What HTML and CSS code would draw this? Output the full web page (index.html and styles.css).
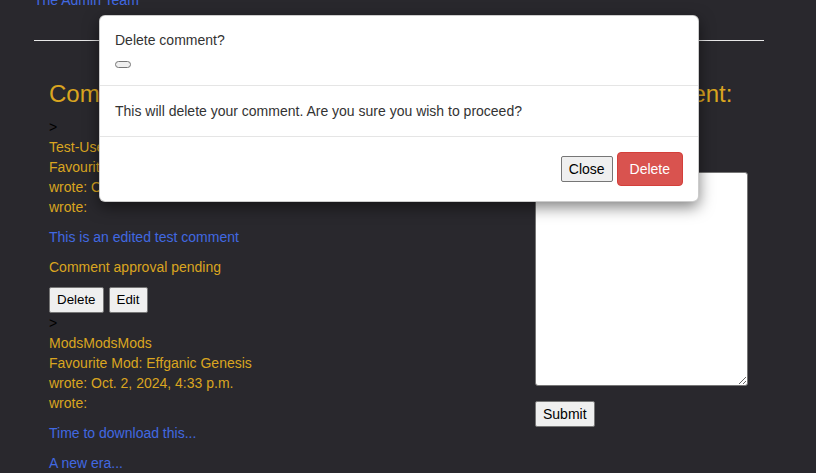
FILE: index.html
```html
<!DOCTYPE html>
<html lang="en">
<head>
<meta charset="utf-8">
<title>Comments</title>
<link rel="stylesheet" href="styles.css">
</head>
<body>
<div class="page">
  <p class="signoff"><a class="link" href="#">The Admin Team</a></p>
  <hr class="rule">
  <div class="row">
    <div class="col-main">
      <h3 class="heading">Comments:</h3>
      <div class="comment">
        <div class="marker">&gt;</div>
        <p class="meta">Test-User<br>Favourite Mod: Effganic Genesis<br>wrote: Oct. 1, 2024, 2:15 p.m.<br>wrote:</p>
        <p class="body-text">This is an edited test comment</p>
        <p class="meta">Comment approval pending</p>
        <div class="actions"><button class="btn-plain btn-small">Delete</button> <button class="btn-plain btn-small">Edit</button></div>
      </div>
      <div class="comment">
        <div class="marker">&gt;</div>
        <p class="meta">ModsModsMods<br>Favourite Mod: Effganic Genesis<br>wrote: Oct. 2, 2024, 4:33 p.m.<br>wrote:</p>
        <p class="body-text">Time to download this...</p>
        <p class="body-text">A new era...</p>
      </div>
    </div>
    <div class="col-side">
      <h3 class="heading">Leave a comment:</h3>
      <form class="comment-form">
        <label class="field-label" for="body">Body:</label>
        <textarea id="body" class="field"></textarea>
        <button type="button" class="btn-plain">Submit</button>
      </form>
    </div>
  </div>
</div>

<div class="modal">
  <div class="modal-header">
    <h4 class="modal-title">Delete comment?</h4>
    <button type="button" class="btn-x" aria-label="Close"></button>
  </div>
  <div class="modal-body">
    <p class="modal-text">This will delete your comment. Are you sure you wish to proceed?</p>
  </div>
  <div class="modal-footer">
    <button type="button" class="btn-plain">Close</button> <button type="button" class="btn-danger">Delete</button>
  </div>
</div>
</body>
</html>
```

FILE: styles.css
```css
html, body {
  margin: 0;
  padding: 0;
}

body {
  background: #29282d;
  color: #333;
  font-family: "Liberation Sans", Arial, sans-serif;
  font-size: 14px;
  line-height: 20px;
  overflow: hidden;
}

.page {
  width: 730px;
  margin-left: 34px;
}

.signoff {
  margin: -10px 0 10px;
}

.link {
  color: royalblue;
  text-decoration: none;
}

.rule {
  margin: 30px 0 20px;
  border: 0;
  border-top: 1px solid #e8e8e8;
  height: 0;
}

.row {
  display: grid;
  grid-template-columns: 486px 244px;
}

.col-main,
.col-side {
  padding: 0 15px;
}

.heading {
  margin: 20px 0 10px;
  font-size: 24px;
  line-height: 1.1;
  font-weight: 500;
  color: goldenrod;
}

.marker {
  color: #000;
}

.meta {
  margin: 0 0 10px;
  color: goldenrod;
}

.body-text {
  margin: 0 0 10px;
  color: royalblue;
}

.actions {
  display: flex;
  gap: 5px;
}

.btn-plain {
  font-family: "Liberation Sans", Arial, sans-serif;
  font-size: 14px;
  line-height: 20px;
  color: #000;
  background: #efefef;
  border: 1px solid #767676;
  border-radius: 2px;
  padding: 2px 7px;
  margin: 0;
}

.btn-small {
  font-size: 13.33px;
}

.field-label {
  display: block;
  margin-bottom: 35px;
  color: goldenrod;
}

.field {
  display: block;
  box-sizing: border-box;
  width: 213px;
  height: 214px;
  margin: 0 0 15px;
  border: 1px solid #767676;
  border-radius: 3px;
  background: #fff;
  font: inherit;
}

.modal {
  position: absolute;
  top: 15px;
  left: 99px;
  width: 600px;
  background: #fff;
  border: 1px solid rgba(0, 0, 0, 0.2);
  border-radius: 6px;
  box-shadow: 0 5px 15px rgba(0, 0, 0, 0.5);
  box-sizing: border-box;
  color: #333;
}

.modal-header {
  padding: 14px 15px 15px;
  border-bottom: 1px solid #e5e5e5;
}

.modal-title {
  margin: 0;
  font-size: 14px;
  line-height: 20px;
  font-weight: 400;
}

.btn-x {
  display: block;
  width: 16px;
  height: 7px;
  margin: 11px 0 2px;
  padding: 0;
  background: #efefef;
  border: 1px solid #767676;
  border-radius: 4px;
}

.modal-body {
  padding: 15px;
}

.modal-text {
  margin: 0;
}

.modal-footer {
  padding: 15px;
  border-top: 1px solid #e5e5e5;
  text-align: right;
}

.btn-danger {
  font-family: "Liberation Sans", Arial, sans-serif;
  font-size: 14px;
  line-height: 20px;
  color: #fff;
  background: #d9534f;
  border: 1px solid #d43f3a;
  border-radius: 4px;
  padding: 6px 12px;
  margin: 0;
}
```
